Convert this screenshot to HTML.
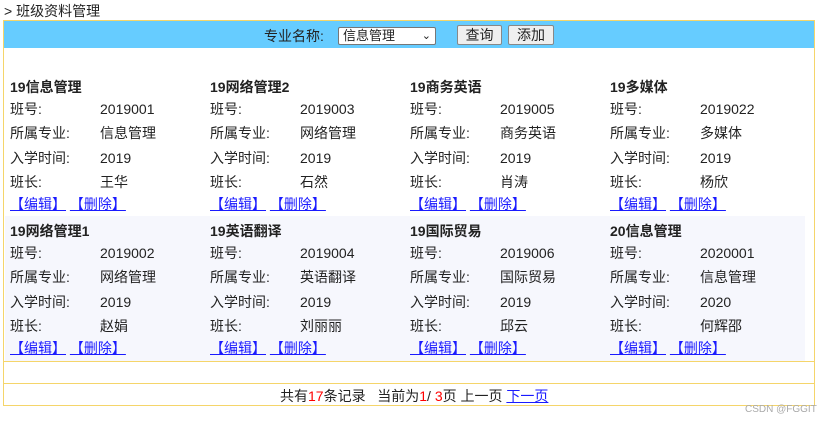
<!DOCTYPE html>
<html><head><meta charset="utf-8"><style>
*{margin:0;padding:0;box-sizing:border-box}
body{width:829px;height:423px;background:#fff;font-family:"Liberation Sans","Noto Sans CJK SC",sans-serif;font-size:14px;color:#222;position:relative;overflow:hidden}
.a{position:absolute;white-space:nowrap;line-height:18px}
.box{position:absolute;left:3px;top:20px;width:812px;height:386px;border:1px solid #f5d56a}
.bar{position:absolute;left:4px;top:21px;width:810px;height:27px;background:#66ccff}
.row2{position:absolute;left:5px;top:216px;width:800px;height:145px;background:#f6f7fd}
.hl{position:absolute;left:4px;width:810px;height:1px;background:#f5d56a}
.t{font-weight:bold}
a{color:#1a1aff;text-decoration:underline}
.sel{position:absolute;left:338px;top:27px;width:98px;height:18px;background:#fff;border:1px solid #777;border-radius:2px;font-size:13px;line-height:16px;padding-left:4px}
.btn{position:absolute;top:25px;height:20px;background:#efefef;border:1px solid #888;border-radius:2px;font-size:14px;line-height:18px;text-align:center}
</style></head><body>
<div class="a" style="left:4px;top:2px">&gt; 班级资料管理</div>
<div class="box"></div>
<div class="bar"></div>
<div class="a" style="left:264px;top:27px">专业名称:</div>
<div class="sel">信息管理<span style="position:absolute;right:4px;top:0;font-size:11px">&#8964;</span></div>
<div class="btn" style="left:457px;width:45px">查询</div>
<div class="btn" style="left:508px;width:46px">添加</div>
<div class="row2"></div>
<div class="hl" style="top:361px"></div>
<div class="hl" style="top:383px"></div>
<div id="cards"></div>
<div class="a" style="left:280px;top:387px">共有<span style="color:#f00">17</span>条记录&nbsp;&nbsp; 当前为<span style="color:#f00">1</span>/ <span style="color:#f00">3</span>页 上一页 <a>下一页</a></div>
<div class="a" style="left:745px;top:401px;font-size:10px;color:#aaa">CSDN @FGGIT</div>
<script>
var d=[["19信息管理","2019001","信息管理","2019","王华"],["19网络管理2","2019003","网络管理","2019","石然"],["19商务英语","2019005","商务英语","2019","肖涛"],["19多媒体","2019022","多媒体","2019","杨欣"],
["19网络管理1","2019002","网络管理","2019","赵娟"],["19英语翻译","2019004","英语翻译","2019","刘丽丽"],["19国际贸易","2019006","国际贸易","2019","邱云"],["20信息管理","2020001","信息管理","2020","何辉邵"]];
var h="";var L=["班号:","所属专业:","入学时间:","班长:"];
d.forEach(function(c,i){var x=10+200*(i%4),y=i<4?78:222;
h+='<div class="a t" style="left:'+x+'px;top:'+y+'px">'+c[0]+'</div>';
for(var k=0;k<4;k++){var yy=y+22+24.3*k;h+='<div class="a" style="left:'+x+'px;top:'+yy+'px">'+L[k]+'</div><div class="a" style="left:'+(x+90)+'px;top:'+yy+'px">'+c[k+1]+'</div>';}
h+='<div class="a" style="left:'+x+'px;top:'+(y+117)+'px"><a>【编辑】</a> <a>【删除】</a></div>';});
document.getElementById("cards").innerHTML=h;
</script>
</body></html>
